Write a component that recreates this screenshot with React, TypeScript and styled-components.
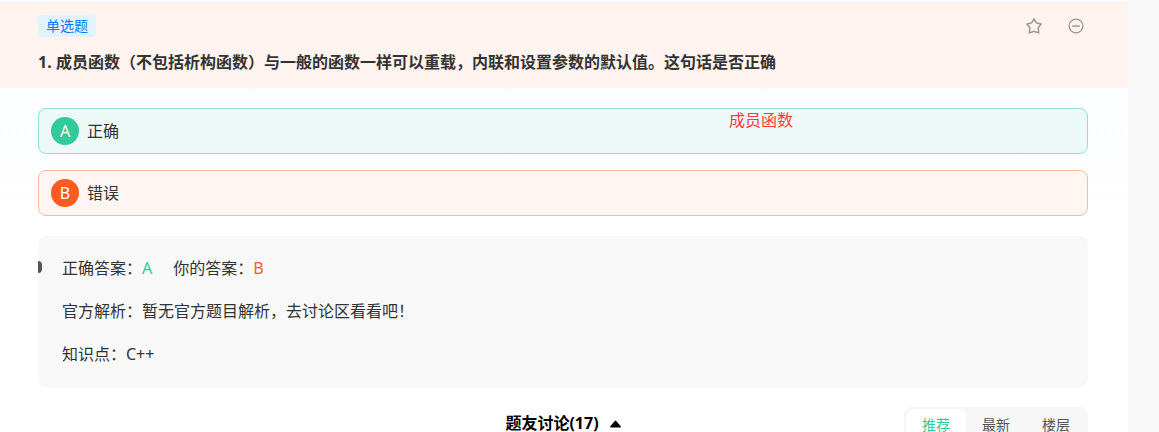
import React from "react";
import styled, { createGlobalStyle } from "styled-components";

const GlobalStyle = createGlobalStyle`
  *, *::before, *::after { box-sizing: border-box; }
  body {
    margin: 0;
    overflow: hidden;
    background: #f8f8f8;
    color: #333;
    font-family: "Noto Sans", "Noto Sans CJK SC", sans-serif;
    font-size: 16px;
    line-height: 24px;
  }
  button { font: inherit; color: inherit; cursor: pointer; }
  h1, h2, p, dl, dd, ol { margin: 0; padding: 0; }
`;

const Page = styled.main`
  margin-right: 31px;
  padding-top: 2px;
  min-height: 100vh;
  background: linear-gradient(#fafcff 0, #fafcff 60px, #ffffff 220px);
`;

const QuestionHeader = styled.header`
  padding: 13px 40px 14px 38px;
  background: #fff3ef;
`;

const HeaderTop = styled.div`
  display: flex;
  align-items: center;
  justify-content: space-between;
`;

const Tag = styled.span`
  padding: 0 8px;
  border-radius: 4px;
  background: #e2f2ff;
  color: #007aff;
  font-size: 14px;
  line-height: 22px;
`;

const Actions = styled.div`
  display: flex;
  gap: 26px;
  padding-right: 4px;
`;

const IconButton = styled.button`
  display: flex;
  padding: 0;
  border: 0;
  background: none;
`;

const QuestionTitle = styled.h1`
  display: flex;
  margin-top: 13px;
  font-size: 16px;
  font-weight: 700;
  line-height: 24px;
`;

const QuestionNumber = styled.span`
  flex: none;
  width: 18px;
`;

const Content = styled.div`
  padding: 20px 40px 0 38px;
`;

const OptionList = styled.ol`
  position: relative;
  display: grid;
  gap: 16px;
  list-style: none;
`;

const Option = styled.button<{ $correct: boolean }>`
  display: flex;
  align-items: center;
  gap: 8px;
  width: 100%;
  height: 46px;
  padding: 0 12px;
  border: 1px solid ${(p) => (p.$correct ? "#8fe3c8" : "#ffb9a0")};
  border-radius: 8px;
  background: ${(p) => (p.$correct ? "#edf9f7" : "#fff5f2")};
  text-align: left;
`;

const Letter = styled.span<{ $correct: boolean }>`
  width: 28px;
  border-radius: 50%;
  background: ${(p) => (p.$correct ? "#32ca99" : "#ff5a1f")};
  color: #fff;
  line-height: 28px;
  text-align: center;
`;

const Note = styled.li`
  position: absolute;
  top: 0;
  left: 691px;
  color: #ff3b3b;
  pointer-events: none;
`;

const Answer = styled.section`
  position: relative;
  display: grid;
  gap: 16px;
  margin-top: 20px;
  padding: 19px 24px;
  border-radius: 8px;
  background: #f8f8f8;
  line-height: 27px;
`;

const Marker = styled.span`
  position: absolute;
  top: 25px;
  left: 0;
  width: 4px;
  height: 12px;
  border-radius: 0 4px 4px 0;
  background: #555;
`;

const AnswerRow = styled.div`
  display: flex;
  gap: 21px;
`;

const Result = styled.span<{ $correct: boolean }>`
  color: ${(p) => (p.$correct ? "#32ca99" : "#ff5a30")};
`;

const Discussion = styled.section`
  display: grid;
  grid-template-columns: 1fr auto 1fr;
  align-items: start;
  margin-top: 20px;
`;

const DiscussionToggle = styled.button`
  display: flex;
  align-items: center;
  grid-column: 2;
  gap: 11px;
  padding: 7px 0 0;
  border: 0;
  background: none;
  color: #000;
  font-weight: 700;
  line-height: 18px;
`;

const DiscussionTitle = styled.span`
  padding-bottom: 2px;
`;

const Tabs = styled.div`
  display: flex;
  justify-self: end;
  padding: 2px;
  border-radius: 8px;
  background: #f7f7f7;
`;

const Tab = styled.button<{ $active?: boolean }>`
  width: 60px;
  height: 32px;
  padding: 0;
  border: 0;
  border-radius: 8px;
  background: ${(p) => (p.$active ? "#fff" : "transparent")};
  color: ${(p) => (p.$active ? "#32ca99" : "#555")};
  font-size: 14px;
`;

const StarIcon = () => (
  <svg width="16" height="16" viewBox="0 0 16 16" fill="none" stroke="#999" strokeWidth="1.5" strokeLinejoin="round" aria-hidden="true">
    <path d="M8 .9 L10.1 4.5 Q10.3 4.9 10.7 5 L15.1 6 L12.4 9.5 Q12.1 9.9 12.2 10.3 L12.8 14.9 L8.6 13.5 Q8 13.3 7.4 13.5 L3.2 14.9 L3.8 10.3 Q3.9 9.9 3.6 9.5 L.9 6 L5.3 5 Q5.7 4.9 5.9 4.5 Z" />
  </svg>
);

const MinusIcon = () => (
  <svg width="16" height="16" viewBox="0 0 16 16" fill="none" stroke="#999" strokeWidth="1.4" aria-hidden="true">
    <circle cx="8" cy="8" r="6.9" />
    <path d="M4.9 8h6.2" strokeWidth="1.7" strokeLinecap="round" />
  </svg>
);

const CaretIcon = () => (
  <svg width="11" height="8" viewBox="0 0 11 8" aria-hidden="true">
    <path d="M5.5 .5 Q5.8 .5 6.2 .9 L10.7 6.2 Q11.2 7.3 10.2 7.5 H.8 Q-.2 7.3 .3 6.2 L4.8 .9 Q5.2 .5 5.5 .5Z" fill="#000" />
  </svg>
);

const options = [
  { letter: "A", text: "正确", correct: true },
  { letter: "B", text: "错误", correct: false },
];

export default function App() {
  return (
    <>
      <GlobalStyle />
      <Page>
        <QuestionHeader>
          <HeaderTop>
            <Tag>单选题</Tag>
            <Actions>
              <IconButton type="button" aria-label="收藏"><StarIcon /></IconButton>
              <IconButton type="button" aria-label="移除"><MinusIcon /></IconButton>
            </Actions>
          </HeaderTop>
          <QuestionTitle>
            <QuestionNumber>1.</QuestionNumber>
            <span>成员函数（不包括析构函数）与一般的函数一样可以重载，内联和设置参数的默认值。这句话是否正确</span>
          </QuestionTitle>
        </QuestionHeader>
        <Content>
          <OptionList>
            {options.map((o) => (
              <li key={o.letter}>
                <Option type="button" $correct={o.correct}>
                  <Letter $correct={o.correct}>{o.letter}</Letter>
                  <span>{o.text}</span>
                </Option>
              </li>
            ))}
            <Note>成员函数</Note>
          </OptionList>
          <Answer>
            <Marker />
            <AnswerRow>
              <span>正确答案：<Result $correct>A</Result></span>
              <span>你的答案：<Result $correct={false}>B</Result></span>
            </AnswerRow>
            <p>官方解析：暂无官方题目解析，去讨论区看看吧！</p>
            <p>知识点：C++</p>
          </Answer>
          <Discussion>
            <DiscussionToggle type="button">
              <DiscussionTitle>题友讨论(17)</DiscussionTitle>
              <CaretIcon />
            </DiscussionToggle>
            <Tabs>
              <Tab type="button" $active>推荐</Tab>
              <Tab type="button">最新</Tab>
              <Tab type="button">楼层</Tab>
            </Tabs>
          </Discussion>
        </Content>
      </Page>
    </>
  );
}
